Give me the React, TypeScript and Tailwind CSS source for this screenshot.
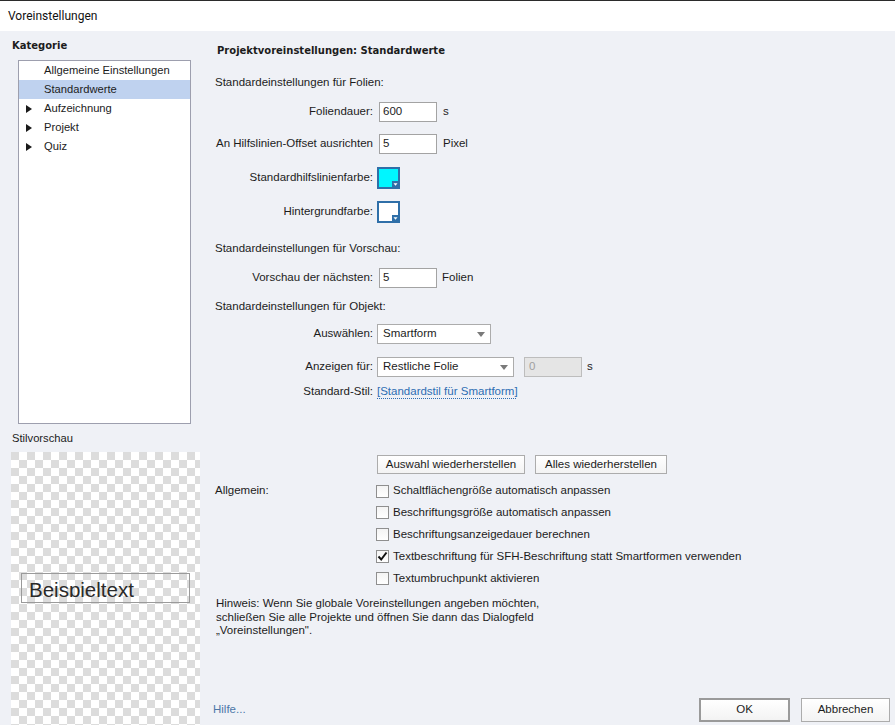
import React from "react"

const categories = [
  { label: "Allgemeine Einstellungen", arrow: false, selected: false },
  { label: "Standardwerte", arrow: false, selected: true },
  { label: "Aufzeichnung", arrow: true, selected: false },
  { label: "Projekt", arrow: true, selected: false },
  { label: "Quiz", arrow: true, selected: false },
]

const checks = [
  { label: "Schaltflächengröße automatisch anpassen", checked: false },
  { label: "Beschriftungsgröße automatisch anpassen", checked: false },
  { label: "Beschriftungsanzeigedauer berechnen", checked: false },
  { label: "Textbeschriftung für SFH-Beschriftung statt Smartformen verwenden", checked: true },
  { label: "Textumbruchpunkt aktivieren", checked: false },
]

function RightTri() {
  return (
    <svg width="6" height="8" viewBox="0 0 6 8">
      <path d="M0 0L6 4L0 8Z" fill="#1a1a1a" />
    </svg>
  )
}

function DownTri() {
  return (
    <svg width="8" height="5" viewBox="0 0 8 5">
      <path d="M0 0H8L4 5Z" fill="#7a7a7a" />
    </svg>
  )
}

function Swatch({ fill }: { fill: string }) {
  return (
    <svg width="23" height="22" viewBox="0 0 23 22">
      <rect x="1" y="1" width="21" height="20" fill={fill} stroke="#2f6fa8" strokeWidth="2" />
      <rect x="15" y="14" width="7" height="7" fill="#2f6fa8" />
      <path d="M16.5 16.2H20.5L18.5 18.8Z" fill="#fff" />
    </svg>
  )
}

function Label({ children }: { children: React.ReactNode }) {
  return <span className="w-[162px] shrink-0 whitespace-nowrap pr-[4px] text-right">{children}</span>
}

function TextInput({ value }: { value: string }) {
  return (
    <div className="ml-[2px] flex h-[20px] w-[58px] items-center border border-[#a3a3a3] bg-white pl-[3px]">
      {value}
    </div>
  )
}

function Select({ value, width }: { value: string; width: string }) {
  return (
    <div className={`flex h-[20px] items-center justify-between border border-[#acacac] bg-white pl-[5px] pr-[5px] ${width}`}>
      <span>{value}</span>
      <DownTri />
    </div>
  )
}

function Checkbox({ checked }: { checked: boolean }) {
  return (
    <div className="flex h-[13px] w-[13px] items-center justify-center border border-[#8f8f8f] bg-gradient-to-b from-[#f4f4f4] to-white">
      {checked && (
        <svg width="11" height="11" viewBox="0 0 11 11">
          <path d="M1.5 5.5L4.2 8.5L9.5 1.5" fill="none" stroke="#111" strokeWidth="2" />
        </svg>
      )}
    </div>
  )
}

export default function App() {
  return (
    <div className="flex h-[725px] w-[895px] flex-col overflow-hidden font-['Liberation_Sans',Arial,sans-serif] text-[11.5px] text-[#1c1c1c]">
      {/* title bar */}
      <div className="flex h-[31px] shrink-0 items-center border-t border-[#2b2b2b] bg-white pl-[8px] font-['Roboto',Arial,sans-serif] text-[12px] text-[#111]">
        Voreinstellungen
      </div>

      <div className="flex min-h-0 flex-1 bg-[#eff1f6]">
        {/* left column */}
        <div className="flex w-[200px] shrink-0 flex-col">
          <div className="ml-[12px] mt-[7px] flex h-[14px] items-center font-['DejaVu_Sans',sans-serif] text-[10px] font-bold">
            Kategorie
          </div>
          <div className="ml-[18px] mt-[8px] h-[364px] w-[173px] border border-[#9d9fae] bg-white text-[11.2px]">
            {categories.map((c) => (
              <div
                key={c.label}
                className={`flex h-[19px] items-center ${c.selected ? "bg-[#bfd2ef]" : ""}`}
              >
                <span className="flex w-[25px] justify-end pr-[12px]">{c.arrow && <RightTri />}</span>
                <span>{c.label}</span>
              </div>
            ))}
          </div>
          <div className="ml-[12px] mt-[7px] flex h-[14px] items-center text-[11.2px]">Stilvorschau</div>
          {/* style preview: the sample text is clipped at the bottom like in the original dialog */}
          <div className="ml-[11px] mt-[7px] w-[189px] flex-1 bg-[conic-gradient(#fff_25%,#dcdcdc_0_50%,#fff_0_75%,#dcdcdc_0)] bg-[length:16px_16px] pt-[121px]">
            <div className="ml-[10px] h-[30px] w-[169px] border border-[#9a9a9a]">
              <div className="h-[23px] overflow-hidden pl-[7px] pt-[6px] text-[20.5px] leading-none text-[#2a2a2a]">
                Beispieltext
              </div>
            </div>
          </div>
        </div>

        {/* right column */}
        <div className="flex min-w-0 flex-1 flex-col pl-[15px] pt-[10px]">
          <div className="ml-[2px] flex h-[18px] items-center font-['DejaVu_Sans',sans-serif] text-[10px] font-bold">
            Projektvoreinstellungen: Standardwerte
          </div>

          <div className="mt-[15px] flex h-[18px] items-center">Standardeinstellungen für Folien:</div>
          <div className="mt-[10px] flex h-[20px] items-center">
            <Label>Foliendauer:</Label>
            <TextInput value="600" />
            <span className="ml-[6px]">s</span>
          </div>
          <div className="mt-[12px] flex h-[20px] items-center">
            <Label>An Hilfslinien-Offset ausrichten</Label>
            <TextInput value="5" />
            <span className="ml-[6px]">Pixel</span>
          </div>
          <div className="mt-[13px] flex h-[22px] items-center">
            <Label>Standardhilfslinienfarbe:</Label>
            <Swatch fill="#00f6ff" />
          </div>
          <div className="mt-[12px] flex h-[22px] items-center">
            <Label>Hintergrundfarbe:</Label>
            <Swatch fill="#ffffff" />
          </div>

          <div className="mt-[17px] flex h-[18px] items-center">Standardeinstellungen für Vorschau:</div>
          <div className="mt-[10px] flex h-[20px] items-center">
            <Label>Vorschau der nächsten:</Label>
            <TextInput value="5" />
            <span className="ml-[5px]">Folien</span>
          </div>

          <div className="mt-[10px] flex h-[18px] items-center">Standardeinstellungen für Objekt:</div>
          <div className="mt-[8px] flex h-[20px] items-center">
            <Label>Auswählen:</Label>
            <Select value="Smartform" width="w-[114px]" />
          </div>
          <div className="mt-[13px] flex h-[20px] items-center">
            <Label>Anzeigen für:</Label>
            <Select value="Restliche Folie" width="w-[137px]" />
            <div className="ml-[10px] flex h-[20px] w-[58px] items-center border border-[#bdbdbd] bg-[#e5e5e5] pl-[4px] text-[#a0a0a0]">
              0
            </div>
            <span className="ml-[5px]">s</span>
          </div>
          <div className="mt-[6px] flex h-[18px] items-center">
            <Label>Standard-Stil:</Label>
            <span className="text-[#2d6db3] underline decoration-dotted underline-offset-[3px]">
              [Standardstil für Smartform]
            </span>
          </div>

          <div className="ml-[162px] mt-[54px] flex h-[19px] gap-[10px]">
            <button className="h-[19px] w-[148px] border border-[#acacac] bg-gradient-to-b from-white to-[#f3f3f3] text-[#1c1c1c]">
              Auswahl wiederherstellen
            </button>
            <button className="h-[19px] w-[132px] border border-[#acacac] bg-gradient-to-b from-white to-[#f3f3f3] text-[#1c1c1c]">
              Alles wiederherstellen
            </button>
          </div>

          <div className="mt-[8px] flex">
            <div className="flex h-[18px] w-[161px] shrink-0 items-center">Allgemein:</div>
            <div className="flex flex-col gap-[3.8px]">
              {checks.map((c) => (
                <div key={c.label} className="flex h-[18px] items-center gap-[4px]">
                  <Checkbox checked={c.checked} />
                  <span>{c.label}</span>
                </div>
              ))}
            </div>
          </div>

          <p className="ml-[1px] mt-[10px] leading-[13.5px]">
            Hinweis: Wenn Sie globale Voreinstellungen angeben möchten,
            <br />
            schließen Sie alle Projekte und öffnen Sie dann das Dialogfeld
            <br />
            „Voreinstellungen".
          </p>

          <div className="flex-1" />

          <div className="mb-[3px] ml-[-2px] flex h-[24px] items-center pr-[5px]">
            <span className="text-[#4d78a8]">Hilfe...</span>
            <div className="flex-1" />
            <button className="h-[24px] w-[91px] border-2 border-[#9a9a9a] bg-gradient-to-b from-white to-[#f3f3f3] text-[#1c1c1c]">
              OK
            </button>
            <button className="ml-[11px] h-[24px] w-[89px] border border-[#acacac] bg-gradient-to-b from-white to-[#f3f3f3] text-[#1c1c1c]">
              Abbrechen
            </button>
          </div>
        </div>
      </div>
    </div>
  )
}
